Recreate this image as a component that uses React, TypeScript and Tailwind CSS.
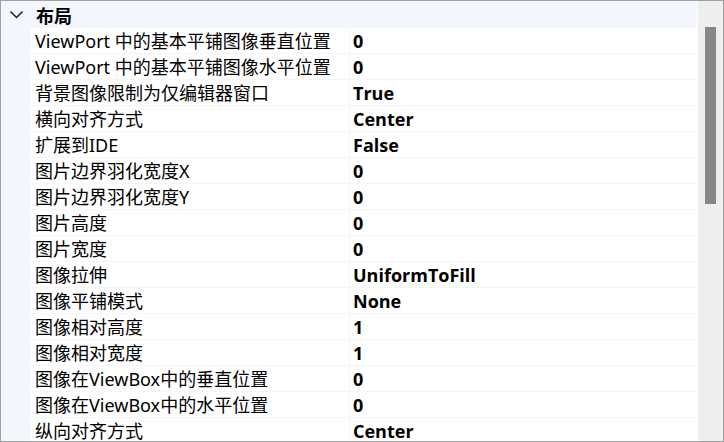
import { useState } from "react";

const properties: [string, string][] = [
  ["ViewPort 中的基本平铺图像垂直位置", "0"],
  ["ViewPort 中的基本平铺图像水平位置", "0"],
  ["背景图像限制为仅编辑器窗口", "True"],
  ["横向对齐方式", "Center"],
  ["扩展到IDE", "False"],
  ["图片边界羽化宽度X", "0"],
  ["图片边界羽化宽度Y", "0"],
  ["图片高度", "0"],
  ["图片宽度", "0"],
  ["图像拉伸", "UniformToFill"],
  ["图像平铺模式", "None"],
  ["图像相对高度", "1"],
  ["图像相对宽度", "1"],
  ["图像在ViewBox中的垂直位置", "0"],
  ["图像在ViewBox中的水平位置", "0"],
  ["纵向对齐方式", "Center"],
];

function PropertyRow({ name, value }: { name: string; value: string }) {
  return (
    <tr className="h-[26px]">
      <th
        scope="row"
        className="w-[320px] border-b border-r border-[#f4f6fa] p-0 pt-[2px] pl-[5px] text-left font-['Noto_Sans','Noto_Sans_CJK_SC',sans-serif] font-normal whitespace-nowrap"
      >
        {name}
      </th>
      <td className="border-b border-[#f4f6fa] p-0 pt-[2px] pl-[3px] font-bold">{value}</td>
    </tr>
  );
}

function ScrollBar() {
  return (
    <div className="w-[25px] shrink-0 bg-[#eeeeee] pt-[26px]">
      <div className="ml-[7px] h-[177px] w-[11px] bg-[#868686]" />
    </div>
  );
}

export default function App() {
  const [open, setOpen] = useState(true);
  return (
    <main className="flex h-screen overflow-hidden border border-[#a0a0a0] bg-white font-['Open_Sans','Noto_Sans_CJK_SC',sans-serif] text-[18px] leading-[23px] text-black">
      <section className="mr-px min-w-0 grow bg-[#f3f6fc]">
        <h2>
          <button
            type="button"
            aria-expanded={open}
            onClick={() => setOpen(!open)}
            className="flex h-[27px] w-full items-center pt-1 pl-2 text-left font-bold"
          >
            <svg className="mr-[11px] mb-1 h-4 w-4" viewBox="0 0 16 16" fill="none" stroke="#1e1e1e" strokeWidth="1.5">
              <path d="M1.5 4.5 7.5 10.5 13.5 4.5" />
            </svg>
            布局
          </button>
        </h2>
        {open && (
          <div className="pl-[29px]">
            <table className="w-full table-fixed border-separate border-spacing-0 bg-white">
              <tbody>
                {properties.map(([name, value]) => (
                  <PropertyRow key={name} name={name} value={value} />
                ))}
              </tbody>
            </table>
          </div>
        )}
      </section>
      <ScrollBar />
    </main>
  );
}
